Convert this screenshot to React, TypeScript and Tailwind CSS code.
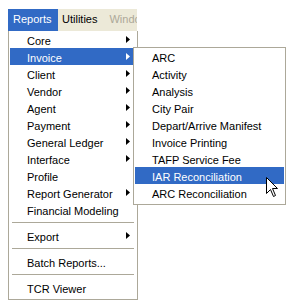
import React from 'react'

type Item = { label: string; sub?: boolean; active?: boolean } | 'sep'

const mainItems: Item[] = [
  { label: 'Core', sub: true },
  { label: 'Invoice', sub: true, active: true },
  { label: 'Client', sub: true },
  { label: 'Vendor', sub: true },
  { label: 'Agent', sub: true },
  { label: 'Payment', sub: true },
  { label: 'General Ledger', sub: true },
  { label: 'Interface', sub: true },
  { label: 'Profile' },
  { label: 'Report Generator', sub: true },
  { label: 'Financial Modeling' },
  'sep',
  { label: 'Export', sub: true },
  'sep',
  { label: 'Batch Reports...' },
  'sep',
  { label: 'TCR Viewer' },
]

const invoiceItems: Item[] = [
  { label: 'ARC' },
  { label: 'Activity' },
  { label: 'Analysis' },
  { label: 'City Pair' },
  { label: 'Depart/Arrive Manifest' },
  { label: 'Invoice Printing' },
  { label: 'TAFP Service Fee' },
  { label: 'IAR Reconciliation', active: true },
  { label: 'ARC Reconciliation' },
]

function Arrow({ white }: { white?: boolean }) {
  return (
    <svg width="4" height="7" viewBox="0 0 4 7" className="shrink-0">
      <path d="M0 0 L4 3.5 L0 7 Z" fill={white ? '#ffffff' : '#000000'} />
    </svg>
  )
}

function MenuRows({ items }: { items: Item[] }) {
  return (
    <>
      {items.map((it, i) =>
        it === 'sep' ? (
          <div key={i} className="h-[9px] flex items-center px-[2px]">
            <div className="h-px w-full bg-[#aca899]" />
          </div>
        ) : (
          <div
            key={i}
            className={
              'h-[17px] pl-[17px] pr-[6px] flex items-center justify-between whitespace-nowrap ' +
              (it.active ? 'bg-[#316ac5] text-white' : 'text-black')
            }
          >
            <span className="h-[17px] pt-[3px] leading-[14px]">{it.label}</span>
            {it.sub && <Arrow white={it.active} />}
          </div>
        )
      )}
    </>
  )
}

export default function App() {
  return (
    <div
      className="relative w-[294px] h-[308px] bg-white overflow-hidden text-[11px]"
      style={{ fontFamily: '"Liberation Sans", Arial, sans-serif' }}
    >
      <div className="pl-[8px] pt-[9px]">
        <div className="flex h-[22px] w-[129px] bg-[#ece9d8] overflow-hidden whitespace-nowrap leading-[20px]">
          <div className="bg-[#316ac5] text-white w-[50px] pl-[5px] shrink-0">Reports</div>
          <div className="pl-[4px] pr-[12px] text-black">Utilities</div>
          <div className="text-[#aca899]">Window</div>
        </div>

        <div className="w-[130px] border border-t-0 border-[#aca899] bg-white px-[1px] pb-[3px]">
          <MenuRows items={mainItems} />
        </div>
      </div>

      <div className="absolute left-[133px] top-[47px] w-[153px] border border-[#aca899] bg-white px-[1px] pb-[3px]">
        <MenuRows items={invoiceItems} />
      </div>

      <svg
        className="absolute left-[266px] top-[177px]"
        width="13"
        height="21"
        viewBox="0 0 13 21"
      >
        <path
          d="M0.5 0.5 L0.5 16.5 L4.5 12.5 L7.5 19.5 L9.5 18.5 L6.5 11.5 L11.5 11.5 Z"
          fill="#ffffff"
          stroke="#000000"
          strokeWidth="1"
        />
      </svg>
    </div>
  )
}
